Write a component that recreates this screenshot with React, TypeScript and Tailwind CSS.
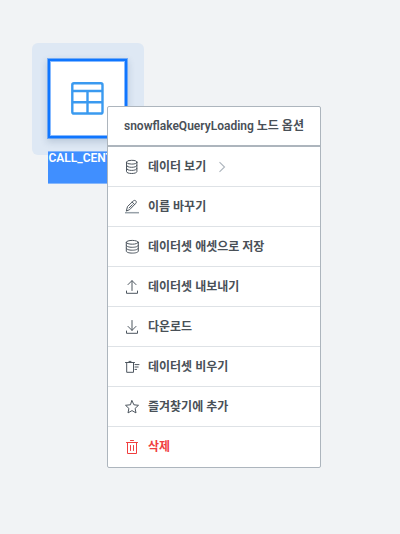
import type { ReactNode } from "react";

function Icon({ children, className = "text-[#4d565f]" }: { children: ReactNode; className?: string }) {
  return (
    <svg
      viewBox="0 0 16 16"
      className={`h-4 w-4 shrink-0 ${className}`}
      fill="none"
      stroke="currentColor"
      strokeWidth="1"
      strokeLinecap="round"
      strokeLinejoin="round"
    >
      {children}
    </svg>
  );
}

const DatabaseIcon = () => (
  <Icon>
    <ellipse cx="7.7" cy="3.2" rx="5.2" ry="1.9" />
    <path d="M2.5 3.2v9.3c0 1.2 2.3 2 5.2 2s5.2-.8 5.2-2V3.2M2.5 6.3c0 1.2 2.3 2 5.2 2s5.2-.8 5.2-2M2.5 9.4c0 1.2 2.3 2 5.2 2s5.2-.8 5.2-2" />
  </Icon>
);

const WideDatabaseIcon = () => (
  <Icon>
    <ellipse cx="8.3" cy="3.3" rx="6" ry="1.9" />
    <path d="M2.3 3.3v8.8c0 1.2 2.7 2 6 2s6-.8 6-2V3.3M2.3 6.3c0 1.2 2.7 2 6 2s6-.8 6-2M2.3 9.2c0 1.2 2.7 2 6 2s6-.8 6-2" />
  </Icon>
);

const PencilIcon = () => (
  <Icon>
    <path d="M2.4 11.7l1.1-4.2 5.9-5.6c.8-.7 1.7-.7 2.4 0s.7 1.7 0 2.4L6 10.3zM8.2 3.1l2.4 2.4M5.2 8.9l3.2-3.2" />
    <path d="M1 13.7h14" stroke="#98a1a9" strokeWidth="1.5" strokeLinecap="butt" />
  </Icon>
);

const UploadIcon = () => (
  <Icon>
    <path d="M8 11.5V1.9M4 5.6L8 1.6l4 4" />
    <path d="M2.5 12v2.3h11V12" strokeLinejoin="miter" />
  </Icon>
);

const DownloadIcon = () => (
  <Icon>
    <path d="M8 1.5v9.8M4 7.4l4 4 4-4" />
    <path d="M2.5 12v2.3h11V12" strokeLinejoin="miter" />
  </Icon>
);

const ClearIcon = () => (
  <Icon>
    <path
      d="M1.5 3.5h9M5 2.4h2M2.7 3.5v9.8h6.8V3.5M11 5.6h4M11 8h3.2M11 10.4h1.6"
      strokeLinejoin="miter"
    />
  </Icon>
);

const StarIcon = () => (
  <Icon>
    <path d="M8 1.7l1.9 4.1 4.6.5-3.4 3.1.9 4.5-4-2.3-4 2.3.9-4.5L1.5 6.3l4.6-.5z" strokeLinejoin="miter" />
  </Icon>
);

const TrashIcon = () => (
  <Icon className="text-[#f03e3e]">
    <path
      d="M2.5 3.5h11M6.5 1.5h3M3.5 3.5v11h9V3.5M6.5 6.5v5M9.5 6.5v5"
      strokeLinejoin="miter"
    />
  </Icon>
);

interface MenuItem {
  label: string;
  icon: ReactNode;
  submenu?: boolean;
  danger?: boolean;
}

const items: MenuItem[] = [
  { label: "데이터 보기", icon: <DatabaseIcon />, submenu: true },
  { label: "이름 바꾸기", icon: <PencilIcon /> },
  { label: "데이터셋 애셋으로 저장", icon: <WideDatabaseIcon /> },
  { label: "데이터셋 내보내기", icon: <UploadIcon /> },
  { label: "다운로드", icon: <DownloadIcon /> },
  { label: "데이터셋 비우기", icon: <ClearIcon /> },
  { label: "즐겨찾기에 추가", icon: <StarIcon /> },
  { label: "삭제", icon: <TrashIcon />, danger: true },
];

function GraphNode() {
  return (
    <div className="absolute left-8 top-[43px] h-28 w-28 rounded-md bg-[#dee8f4] px-4 pt-4">
      <div className="flex h-[79px] w-[79px] items-center justify-center border-2 border-[#0f76ff] bg-white shadow-[0_0_0_1px_rgba(15,118,255,0.5),inset_0_0_0_1px_rgba(15,118,255,0.5),0_3px_7px_1px_rgba(30,60,100,0.18)]">
        <svg viewBox="0 0 33 33" className="h-[33px] w-[33px]" fill="none" stroke="#3a9af0" strokeWidth="2.4">
          <rect x="1.3" y="1.3" width="30.2" height="30.2" rx="1.6" />
          <path d="M1.3 9H31.5M1.3 20.2H31.5M16.5 9v22.5" />
        </svg>
      </div>
      <div className="mt-[13px] h-[33px] w-20 overflow-hidden border-y border-[#408fff]/60 bg-[#408fff] bg-clip-padding pl-[0.5px] text-[12px] font-semibold leading-3 text-white">
        CALL_CENTER
      </div>
    </div>
  );
}

function ContextMenu() {
  return (
    <div className="absolute left-[107px] top-[106px] w-[214px] rounded-xs border border-[#adb5bd] bg-white text-[12px] font-semibold leading-4 text-[#495057]">
      <div className="flex h-10 items-center whitespace-nowrap border-b-2 border-[#adb5bd] pl-4">
        snowflakeQueryLoading 노드 옵션
      </div>
      <ul className="divide-y divide-[#dee2e6]">
        {items.map((item) => (
          <li key={item.label} className="flex h-10 items-center whitespace-nowrap pl-4">
            {item.icon}
            <span className={item.danger ? "ml-2 text-[#f03e3e]" : "ml-2"}>{item.label}</span>
            {item.submenu && (
              <svg viewBox="0 0 8 12" className="ml-3 h-3 w-2" fill="none" stroke="#adb5bd" strokeWidth="1.1">
                <path d="M1.5 1.2L6.5 6l-5 4.8" />
              </svg>
            )}
          </li>
        ))}
      </ul>
    </div>
  );
}

export default function App() {
  return (
    <main className="relative h-[534px] w-[400px] overflow-hidden bg-[#f1f3f5] font-[Roboto,'Noto_Sans_CJK_KR',sans-serif]">
      <GraphNode />
      <ContextMenu />
    </main>
  );
}
